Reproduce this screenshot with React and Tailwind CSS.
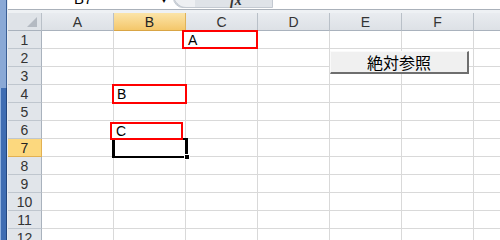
import React from 'react';

const cols = ['A', 'B', 'C', 'D', 'E', 'F', ''];
const rows = [1, 2, 3, 4, 5, 6, 7, 8, 9, 10, 11, 12];

const ColHead = ({ label }) => {
  const active = label === 'B';
  return (
    <div
      className={`h-[18px] flex items-center justify-center border-r border-b text-[14px] leading-none ${
        active
          ? 'bg-gradient-to-b from-[#fbe4a8] to-[#f4c76a] border-r-[#e0b35a] border-b-[#d9a545] text-[#222]'
          : 'bg-gradient-to-b from-[#e9ecf0] to-[#dde1e6] border-r-[#b9c0c8] border-b-[#a9b2bd] text-[#333]'
      }`}
    >
      {label}
    </div>
  );
};

const RowHead = ({ n }) => {
  const active = n === 7;
  return (
    <div
      className={`h-[18px] flex items-center justify-center border-r border-b text-[14px] leading-none ${
        active
          ? 'bg-[#fcd87e] border-r-[#e2b152] border-b-[#e2b152] text-[#222]'
          : 'bg-[#e1e5ea] border-r-[#a9b2bd] border-b-[#bfc6ce] text-[#333]'
      }`}
    >
      {n}
    </div>
  );
};

const TopBar = () => (
  <div className="h-[13px] flex flex-col">
    <div className="h-[9px] relative bg-white overflow-hidden">
      <span className="absolute left-[66px] top-[-9px] text-[15px] leading-none text-black">B7</span>
      <span className="absolute left-[152px] top-[-3px] text-[8px] leading-none text-black">▼</span>
      <div className="absolute left-[165px] top-[-6px] w-[100px] h-[14px] rounded-bl-[10px] bg-[#dfe3e8] border border-[#c3c9d1]">
        <div className="absolute left-[-1px] top-0 w-[22px] h-[13px] rounded-bl-full bg-[#eef0f3] border-l border-b border-[#c3c9d1]" />
        <span className="absolute left-[56px] top-[-1px] text-[14px] leading-none italic font-bold font-['Liberation_Serif',serif] text-[#333]">fx</span>
      </div>
    </div>
    <div className="h-px bg-[#aab1ba]" />
    <div className="h-[3px] bg-[#eef1f4]" />
  </div>
);

export default function App() {
  return (
    <div className="w-[500px] h-[240px] overflow-hidden flex bg-white font-['Liberation_Sans','Noto_Sans_CJK_JP',sans-serif]">
      <div className="w-[8px] flex flex-col shrink-0">
        <div className="h-[88px] flex">
          <div className="w-[6px] bg-[#8aa9d6]" />
          <div className="w-px bg-[#3b5f95]" />
          <div className="w-px bg-[#e8edf3]" />
        </div>
        <div className="flex-1 flex">
          <div className="w-px bg-[#8fb0de]" />
          <div className="w-[5px] bg-[#3f6db2]" />
          <div className="w-px bg-[#23467d]" />
          <div className="w-px bg-[#e8edf3]" />
        </div>
      </div>

      <div className="flex-1 flex flex-col relative">
        <TopBar />
        <div className="grid grid-cols-[34px_repeat(7,72px)]">
          <div className="h-[18px] relative bg-[#dfe3e8] border-r border-b border-r-[#b9c0c8] border-b-[#a9b2bd]">
            <div className="absolute right-[4px] bottom-[3px] w-0 h-0 border-l-[10px] border-l-transparent border-b-[10px] border-b-[#b4bac2]" />
          </div>
          {cols.map((c, i) => (
            <ColHead key={i} label={c} />
          ))}
          {rows.map((r) => (
            <React.Fragment key={r}>
              <RowHead n={r} />
              {cols.map((c, i) => (
                <div key={i} className="h-[18px] border-r border-b border-[#d9d9d9] bg-white" />
              ))}
            </React.Fragment>
          ))}
        </div>

        {/* selected cell B7 */}
        <div className="absolute left-[104px] top-[138px] w-[76px] h-[20px] border-y-[2px] border-x-[3px] border-black" />
        <div className="absolute left-[176px] top-[154px] w-[6px] h-[6px] bg-black border border-white" />

        {/* text boxes */}
        <div className="absolute left-[174px] top-[30px] w-[76px] h-[19px] border-[2px] border-[#ff0000] bg-white flex items-center pl-[4px] text-[14px] leading-none text-black">
          A
        </div>
        <div className="absolute left-[104px] top-[84px] w-[75px] h-[20px] border-[2px] border-[#ff0000] bg-white flex items-center pl-[3px] text-[14px] leading-none text-black">
          B
        </div>
        <div className="absolute left-[102px] top-[122px] w-[73px] h-[18px] border-[2px] border-[#ff0000] bg-white flex items-center pl-[4px] text-[14px] leading-none text-black">
          C
        </div>

        {/* button */}
        <div className="absolute left-[322px] top-[51px] w-[139px] h-[23px] bg-[#f0f0f0] border-t border-l border-t-[#fafafa] border-l-[#fafafa] border-r-[2px] border-b-[2px] border-r-[#6e6e6e] border-b-[#6e6e6e] flex items-center justify-center text-[16px] leading-none text-black font-['Noto_Sans_CJK_JP',sans-serif]">
          絶対参照
        </div>
      </div>
    </div>
  );
}
